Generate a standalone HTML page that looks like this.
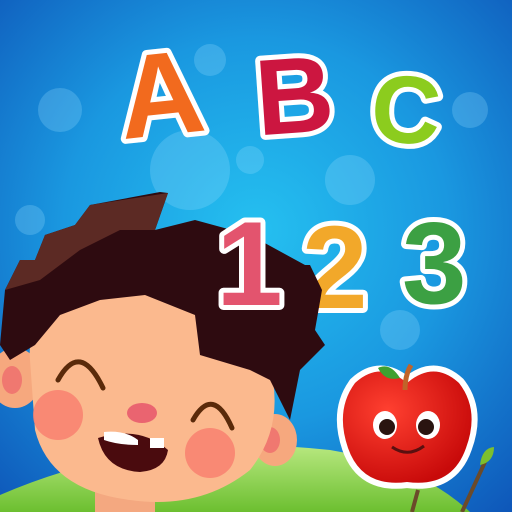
<!DOCTYPE html>
<html><head><meta charset="utf-8"><style>
html,body{margin:0;padding:0;width:512px;height:512px;overflow:hidden;background:#1b78d8}
svg{display:block}
text{font-family:"Liberation Sans",sans-serif;font-weight:bold;paint-order:stroke;stroke:#fff;stroke-linejoin:round}
</style></head><body>
<svg width="512" height="512" viewBox="0 0 512 512" xmlns="http://www.w3.org/2000/svg">
<defs>
<radialGradient id="bg" cx="0.5" cy="0.45" r="0.75">
<stop offset="0" stop-color="#25c0f0"/><stop offset="0.5" stop-color="#1a98e0"/><stop offset="1" stop-color="#0e55b8"/>
</radialGradient>
<radialGradient id="ap" cx="0.35" cy="0.35" r="0.7"><stop offset="0" stop-color="#ff4030"/><stop offset="1" stop-color="#c80a0a"/></radialGradient>
<linearGradient id="hl" x1="0" y1="0" x2="0" y2="1"><stop offset="0" stop-color="#b8e880"/><stop offset="1" stop-color="#6cbf30"/></linearGradient>
</defs>
<rect width="512" height="512" fill="url(#bg)"/>
<g fill="#9ae0ff" opacity="0.25">
<circle cx="60" cy="110" r="22"/><circle cx="210" cy="60" r="16"/><circle cx="350" cy="180" r="25"/><circle cx="470" cy="110" r="18"/><circle cx="400" cy="330" r="20"/><circle cx="250" cy="160" r="14"/><circle cx="30" cy="220" r="15"/><circle cx="190" cy="170" r="40"/>
</g>
<!-- letters -->
<text x="118" y="135" font-size="118" fill="#f26a1e" stroke-width="10" transform="rotate(-6 160 90)">A</text>
<text x="255" y="133" font-size="108" fill="#cc1640" stroke-width="10" transform="rotate(-4 290 90)">B</text>
<text x="372" y="143" font-size="96" fill="#8ccc1e" stroke-width="10" transform="rotate(4 410 100)">C</text>
<text x="302" y="308" font-size="118" fill="#f2a82a" stroke-width="10">2</text>
<text x="402" y="303" font-size="116" fill="#3ca043" stroke-width="10">3</text>
<!-- hill -->
<path d="M0 495 Q150 430 330 450 Q420 465 470 512 L0 512Z" fill="url(#hl)"/>
<!-- stick -->
<path d="M462 512 L485 462" stroke="#6b4a2a" stroke-width="4"/>
<path d="M480 465 Q482 448 494 447 Q494 462 480 465Z" fill="#7cbf2e"/>
<path d="M412 512 L418 490" stroke="#6b4a2a" stroke-width="4"/>
<!-- boy -->
<rect x="95" y="480" width="60" height="40" fill="#f4a880"/>
<ellipse cx="275" cy="440" rx="22" ry="26" fill="#f6a87e"/>
<ellipse cx="270" cy="440" rx="10" ry="13" fill="#f07870"/>
<ellipse cx="15" cy="378" rx="26" ry="30" fill="#f6a87e"/>
<ellipse cx="12" cy="380" rx="10" ry="14" fill="#f07870"/>
<path d="M30 360 Q25 300 100 290 Q210 280 265 350 Q290 420 250 470 Q200 510 130 500 Q50 490 35 430Z" fill="#fbb98e"/>
<path d="M0 345 L5 290 L20 260 L35 260 L45 235 L75 225 L90 205 L160 192 L168 193 L155 230 L195 220 L250 235 L305 265 L310 265 L322 290 L315 330 L325 345 L300 370 L290 420 L270 380 L250 370 L200 355 L195 315 L145 295 L100 300 L60 315 L35 345 L10 360Z" fill="#2e0b10"/>
<path d="M5 290 L20 260 L35 260 L45 235 L75 225 L90 205 L168 193 L155 230 L120 230 L80 250 L40 280Z" fill="#5c2a24"/>
<text x="216" y="305" font-size="120" fill="#e3546e" stroke-width="10">1</text>
<path d="M58 380 Q80 340 103 388" stroke="#5a2a0a" stroke-width="5" fill="none" stroke-linecap="round"/>
<path d="M193 420 Q213 385 232 428" stroke="#5a2a0a" stroke-width="5" fill="none" stroke-linecap="round"/>
<circle cx="58" cy="415" r="25" fill="#f88070" opacity="0.85"/>
<circle cx="210" cy="453" r="25" fill="#f88070" opacity="0.85"/>
<ellipse cx="142" cy="413" rx="15" ry="10" fill="#ea6470"/>
<path d="M98 438 Q140 425 168 450 Q165 470 140 472 Q105 470 98 438Z" fill="#4a0b0e"/>
<path d="M104 432 Q125 430 138 440 L138 445 Q118 445 104 440Z" fill="#fff"/>
<rect x="150" y="438" width="14" height="10" fill="#fff"/>
<!-- apple -->
<path d="M407 383 Q380 360 355 383 Q335 410 348 448 Q362 488 407 482 Q452 488 466 448 Q480 410 459 383 Q434 360 407 383Z" fill="#fff" stroke="#fff" stroke-width="12" stroke-linejoin="round"/>
<path d="M407 383 Q380 360 355 383 Q335 410 348 448 Q362 488 407 482 Q452 488 466 448 Q480 410 459 383 Q434 360 407 383Z" fill="url(#ap)"/>
<path d="M405 390 Q405 375 411 365" stroke="#c0642a" stroke-width="5" fill="none"/>
<path d="M400 378 Q390 362 378 368 Q385 382 400 378Z" fill="#3ea030"/>
<ellipse cx="385" cy="425" rx="12" ry="14" fill="#fff"/><ellipse cx="428" cy="425" rx="12" ry="14" fill="#fff"/>
<circle cx="387" cy="427" r="8" fill="#2a1410"/><circle cx="426" cy="427" r="8" fill="#2a1410"/>
<path d="M392 447 Q408 458 424 446" stroke="#5a1010" stroke-width="3" fill="none"/>
</svg>
</body></html>
